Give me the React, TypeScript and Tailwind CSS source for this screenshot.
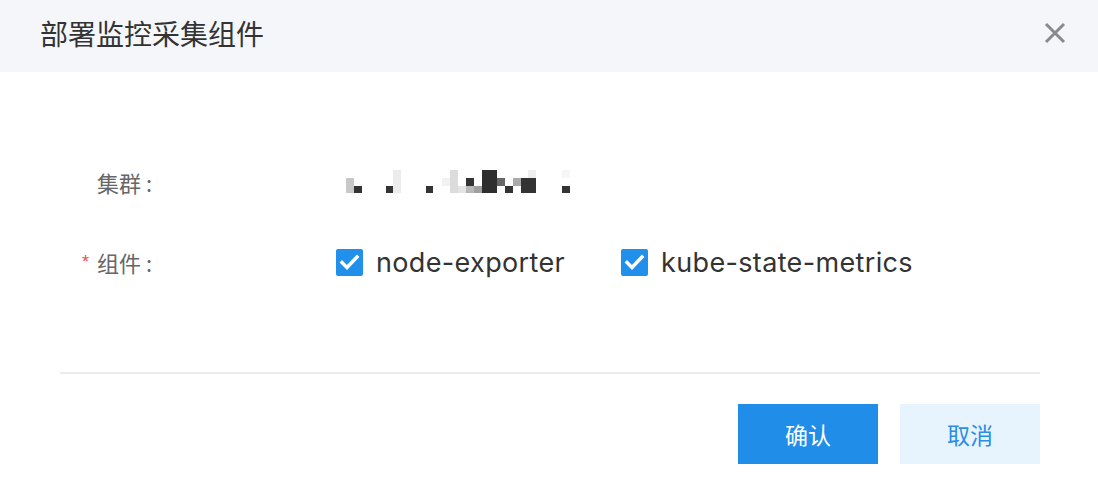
import { useState } from 'react'

const cjk = "font-['Noto_Sans_CJK_SC',sans-serif]"

// mosaic that hides the cluster name
const mosaic: [number, number, number, number, string][] = [
  [10, 8, 8, 15, '#c8c8c8'],
  [18, 16, 8, 7, '#333333'],
  [50, 16, 7, 7, '#333333'],
  [57, 0, 8, 23, '#ececec'],
  [90, 16, 7, 7, '#333333'],
  [106, 8, 8, 8, '#f2f2f2'],
  [114, 0, 8, 23, '#dcdcdc'],
  [122, 16, 8, 7, '#e4e4e4'],
  [130, 8, 8, 8, '#333333'],
  [130, 16, 8, 7, '#b8b8b8'],
  [138, 16, 8, 7, '#a0a0a0'],
  [146, 0, 15, 23, '#2e2e2e'],
  [161, 8, 8, 8, '#666666'],
  [169, 16, 8, 7, '#333333'],
  [177, 8, 8, 8, '#aaaaaa'],
  [185, 8, 15, 15, '#333333'],
  [192, 0, 8, 8, '#eeeeee'],
  [226, 0, 8, 8, '#f6f6f6'],
  [226, 16, 8, 7, '#333333'],
]

const components = ['node-exporter', 'kube-state-metrics']

function Checkbox({ checked, label, onToggle }: { checked: boolean, label: string, onToggle: () => void }) {
  return (
    <label className="mr-[56px] flex cursor-pointer items-center" onClick={onToggle}>
      <span className={`flex size-[27px] items-center justify-center rounded-[2px] ${checked ? 'bg-[#2090ea]' : 'border-2 border-[#cfd6e0] bg-white'}`}>
        {checked && (
          <svg width="27" height="27" viewBox="0 0 27 27">
            <path d="M6 13.5 L11 18.5 L21 8" fill="none" stroke="white" strokeWidth="3.4" strokeLinecap="square" />
          </svg>
        )}
      </span>
      <span className="ml-[13px] font-['Inter',sans-serif] text-[27px] leading-none tracking-[0.35px] text-[#333]">{label}</span>
    </label>
  )
}

export default function App() {
  const [ checked, setChecked ] = useState<Record<string, boolean>>({
    'node-exporter': true,
    'kube-state-metrics': true,
  })

  return (
    <div className={`flex h-[494px] w-[1098px] flex-col bg-white ${cjk}`}>
      <header className="flex h-[72px] items-center justify-between bg-[#f5f6fa] pb-[6px] pl-[40px] pr-[32px]">
        <h1 className="text-[28px] font-normal text-[#333]">部署监控采集组件</h1>
        <button type="button" aria-label="close" className="flex size-[22px] items-center justify-center">
          <svg width="22" height="22" viewBox="0 0 22 22">
            <path d="M2 2 L20 20 M20 2 L2 20" stroke="#8a8a8a" strokeWidth="3" />
          </svg>
        </button>
      </header>

      <div className="flex flex-col gap-[40px] pl-[80px] pt-[90px]">
        <div className="flex h-[40px] items-center">
          <div className="flex w-[256px] items-center text-[22px] text-[#666]">
            <span className="w-[17px]" />
            <span>集群</span>
            <span className="ml-[5px]">:</span>
          </div>
          <svg width="240" height="24" viewBox="0 0 240 24">
            {mosaic.map(([ x, y, w, h, c ], i) => (
              <rect key={i} x={x} y={y} width={w} height={h} fill={c} />
            ))}
          </svg>
        </div>

        <div className="flex h-[40px] items-center">
          <div className="flex w-[256px] items-center text-[22px] text-[#666]">
            <span className="w-[17px] pl-[2px] font-['Liberation_Sans',sans-serif] text-[18px] text-[#ee4d4d]">*</span>
            <span>组件</span>
            <span className="ml-[5px]">:</span>
          </div>
          <div className="flex items-center">
            {components.map((c) => (
              <Checkbox
                key={c}
                label={c}
                checked={checked[c]}
                onToggle={() => setChecked((s) => ({ ...s, [c]: !s[c] }))}
              />
            ))}
          </div>
        </div>
      </div>

      <footer className="mt-[90px] pl-[60px] pr-[58px]">
        <div className="h-[2px] bg-[#e9ecf3]" />
        <div className="mt-[30px] flex justify-end gap-[22px]">
          <button type="button" className="h-[60px] w-[140px] bg-[#208ee9] text-[23px] text-white">确认</button>
          <button type="button" className="h-[60px] w-[140px] bg-[#e8f4fd] text-[23px] text-[#2a8de6]">取消</button>
        </div>
      </footer>
    </div>
  )
}
